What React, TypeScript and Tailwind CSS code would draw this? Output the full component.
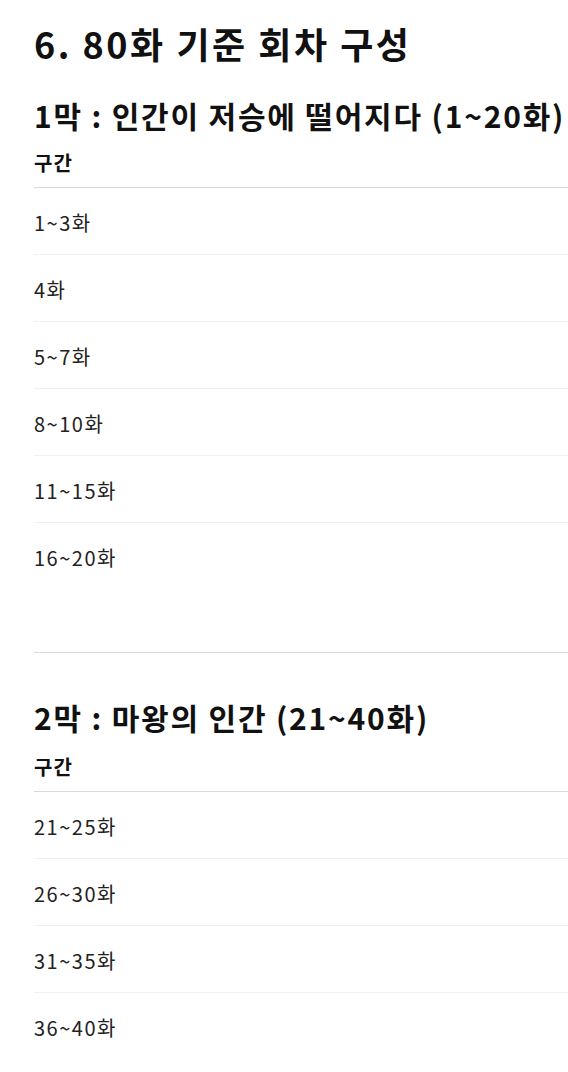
const act1 = ["1~3화", "4화", "5~7화", "8~10화", "11~15화", "16~20화"];
const act2 = ["21~25화", "26~30화", "31~35화", "36~40화"];

function EpisodeTable({ rows }: { rows: string[] }) {
  return (
    <div className="w-[800px]">
      <div className="pb-[12px] border-b border-[#d9d9d9] text-[20px] leading-[24px] tracking-[1px] font-bold text-[#111]">
        구간
      </div>
      {rows.map((r, i) => (
        <div
          key={r}
          className={
            i < rows.length - 1
              ? "pt-[23px] pb-[19px] text-[20px] leading-[24px] tracking-[1.5px] text-[#222] border-b border-[#f0f0f0]"
              : "pt-[23px] pb-[19px] text-[20px] leading-[24px] tracking-[1.5px] text-[#222]"
          }
        >
          {r}
        </div>
      ))}
    </div>
  );
}

export default function App() {
  return (
    <main
      className="w-[568px] overflow-hidden bg-white pl-[34px] pt-[18px] pb-[20px]"
      style={{ fontFamily: '"Noto Sans CJK KR", "Noto Sans", sans-serif' }}
    >
      <h2 className="text-[36px] leading-[50px] tracking-[2.5px] font-bold text-[#111] whitespace-nowrap">
        6. 80화 기준 회차 구성
      </h2>

      <h3 className="mt-[30px] text-[30px] leading-[34px] tracking-[1.8px] font-bold text-[#111] whitespace-nowrap">
        1막 : 인간이 저승에 떨어지다 (1~20화)
      </h3>
      <div className="mt-[19px]">
        <EpisodeTable rows={act1} />
      </div>

      <hr className="mt-[63px] w-[800px] border-0 border-t border-[#dcdcdc]" />

      <h3 className="mt-[47px] text-[30px] leading-[34px] tracking-[1.8px] font-bold text-[#111] whitespace-nowrap">
        2막 : 마왕의 인간 (21~40화)
      </h3>
      <div className="mt-[21px]">
        <EpisodeTable rows={act2} />
      </div>
    </main>
  );
}
